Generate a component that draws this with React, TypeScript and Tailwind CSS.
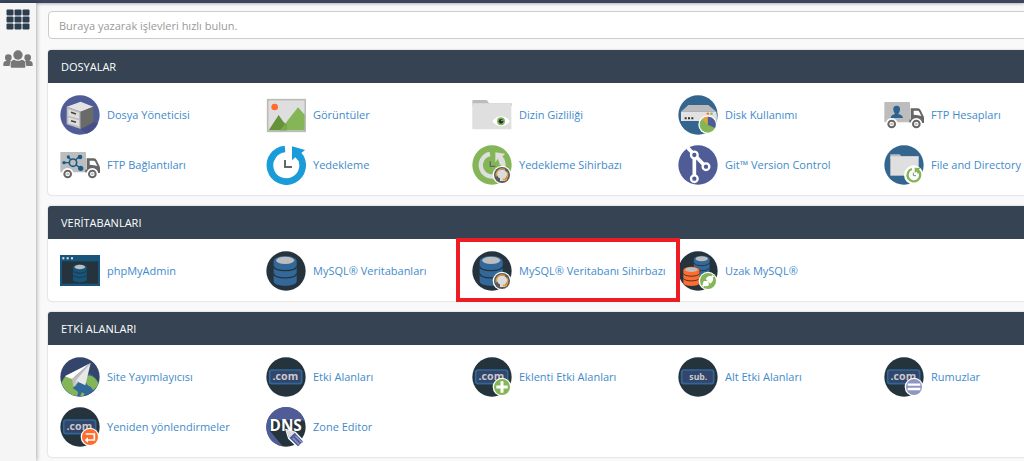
import React from "react";

type IconProps = { children: React.ReactNode };

function Icon({ children }: IconProps) {
  return (
    <svg viewBox="0 0 120 120" className="h-10 w-10 shrink-0" aria-hidden="true">
      {children}
    </svg>
  );
}

function Disc({ fill }: { fill: string }) {
  return <circle cx="60" cy="60" r="59" fill={fill} />;
}

function Truck({ children }: IconProps) {
  return (
    <Icon>
      <rect x="1" y="21" width="77" height="61" rx="2" fill="#bdbdbd" />
      <path d="M80 40h22q5 0 8 6l8 16q2 3 2 6v16H80z" fill="#666" />
      <path d="M89 47h12q3 0 5 4l6 12-10-2-13-2z" fill="#fff" />
      <rect x="76" y="74" width="10" height="8" fill="#666" />
      {[23, 97].map((cx) => (
        <g key={cx}>
          <circle cx={cx} cy="87" r="18" fill="#fff" />
          <circle cx={cx} cy="87" r="10" fill="#fff" stroke="#666" strokeWidth="6" />
          <circle cx={cx} cy="87" r="4" fill="#bbb" />
        </g>
      ))}
      {children}
    </Icon>
  );
}

// Three stacked discs with a grey lid
function Cylinder({ color, line }: { color: string; line: string }) {
  return (
    <>
      <path d="M23 30v61c0 18 69 18 69 0V30z" fill={color} />
      <ellipse cx="57.500" cy="30" rx="34.500" ry="15" fill={color} />
      <ellipse cx="57.500" cy="28" rx="27" ry="11" fill="#bdbdbd" />
      <path d="M23 46c4 17 65 17 69 0M23 68c4 17 65 17 69 0" fill="none" stroke={line} strokeWidth="4" />
    </>
  );
}

function WizardBadge() {
  return (
    <>
      <circle cx="90" cy="90" r="28" fill="#fff" />
      <circle cx="90" cy="90" r="24" fill="#5a5a5a" />
      <path d="M73 94a18 18 0 0 1 26-20M104 80a18 18 0 0 1-8 27" fill="none" stroke="#e5a33c" strokeWidth="4" />
      <path d="M90 74c18 0 19 19 9 26v8H84v-8c-14-7-11-26 6-26z" fill="#dcdcdc" />
      <path d="M92 101h13v5H92z" fill="#e5a33c" />
    </>
  );
}

function DomainPlate({ label }: { label: string }) {
  return (
    <>
      <Disc fill="#25333d" />
      <rect x="11" y="39" width="96" height="41" rx="7" fill="#34456b" stroke="#2f6896" strokeWidth="5" />
      {label === "sub." ? (
        <text x="61" y="69" fontSize="26" fontWeight="700" textAnchor="middle" fill="#c8cacc" className="font-['Open_Sans',sans-serif]">
          {label}
        </text>
      ) : (
        <text x="58" y="70" fontSize="32" fontWeight="700" textAnchor="middle" fill="#c8cacc" className="font-['Open_Sans',sans-serif]">
          {label}
        </text>
      )}
    </>
  );
}

function Badge({ fill, children }: { fill: string; children: React.ReactNode }) {
  return (
    <>
      <circle cx="90" cy="90" r="28" fill="#fff" />
      <circle cx="90" cy="90" r="24" fill={fill} />
      {children}
    </>
  );
}

const icons = {
  fileManager: (
    <Icon>
      <Disc fill="#505c96" />
      <path d="M62 102l38-20 14 3q-10 24-34 31l-18-14z" fill="#465087" />
      <path d="M20 35l42-15 38 15-38 15z" fill="#e4e4e4" />
      <path d="M20 35l42 15v52L20 88z" fill="#bcbcbc" />
      <path d="M62 50l38-15v47l-38 20z" fill="#6a6a66" />
      <path d="M25 43l32 10v18l-32-9zM25 67l32 9v18l-32-10z" fill="#dedede" />
      <path d="M33 52l15 5M33 77l15 5" stroke="#444" strokeWidth="5" />
    </Icon>
  ),
  images: (
    <Icon>
      <rect x="5" y="14" width="113" height="95" fill="#dedede" stroke="#bbb" strokeWidth="5" />
      <circle cx="26" cy="36" r="10" fill="#ff6c2c" />
      <path d="M42 106l54-69 20 22v47z" fill="#84b657" />
      <path d="M8 106l30-46 14 20 10 10v16z" fill="#669239" />
      <path d="M42 106l15-20 8 14-3 6z" fill="#78a94c" />
    </Icon>
  ),
  directoryPrivacy: (
    <Icon>
      <path d="M1 28V18q0-3 3-3h38q3 0 5 3l4 7h68v8H1z" fill="#bcbcbc" />
      <rect x="1" y="25" width="117" height="78" rx="2" fill="#dfdfdf" />
      <path d="M61 79c15-20 38-20 53 0-15 20-38 20-53 0z" fill="#fff" />
      <circle cx="87" cy="79" r="12" fill="#84b657" />
      <circle cx="87" cy="79" r="7" fill="#25333d" />
      <circle cx="90" cy="76" r="2" fill="#fff" />
    </Icon>
  ),
  diskUsage: (
    <Icon>
      <Disc fill="#33658f" />
      <path d="M31 30h60l24 20H9z" fill="#bbb" />
      <path d="M9 50h106q3 12 1 28H9z" fill="#e2e2e2" />
      <path d="M20 67h6v6h-6zM30 67h6v6h-6zM40 67h6v6h-6z" fill="#333" />
      <path d="M86 53h7v6h-7z" fill="#ff6c2c" />
      <path d="M97 53h7v6h-7z" fill="#84b657" />
      <circle cx="89" cy="89" r="28" fill="#fff" />
      <circle cx="89" cy="89" r="24" fill="#84b657" />
      <path d="M89 89V65a24 24 0 0 1 22 34z" fill="#505c96" />
      <path d="M89 89V65a24 24 0 0 0-17 7z" fill="#e5a33c" />
    </Icon>
  ),
  ftpAccounts: (
    <Truck>
      <path d="M38 32c8 0 11 5 10 12s-3 9-5 11c0 5 13 3 14 14H20c1-11 13-9 13-14-2-2-4-4-5-11s2-12 10-12z" fill="#2c6390" />
    </Truck>
  ),
  ftpConnections: (
    <Truck>
      <path d="M12 53h17M24 36l10 10M46 46l14-14M46 59l16 10" stroke="#185b87" strokeWidth="4" />
      <circle cx="39" cy="53" r="11" fill="#bdbdbd" stroke="#185b87" strokeWidth="5" />
      <circle cx="12" cy="53" r="5" fill="#185b87" />
      <circle cx="25" cy="36" r="5" fill="#185b87" />
      <circle cx="60" cy="36" r="7" fill="#185b87" />
      <circle cx="62" cy="70" r="8" fill="#185b87" />
    </Truck>
  ),
  backup: (
    <Icon>
      <path d="M57 12a49 49 0 1 0 42 18" fill="none" stroke="#1a9bda" strokeWidth="20" />
      <path d="M78 4l39 11-12 10 6 10-14 12-9-10-10 9z" fill="#1a9bda" />
      <path d="M57 45v21h21" fill="none" stroke="#666" strokeWidth="6" />
    </Icon>
  ),
  backupWizard: (
    <Icon>
      <Disc fill="#84b657" />
      <path d="M54 27a34 34 0 1 0 32 11" fill="none" stroke="#dedede" strokeWidth="13" />
      <path d="M70 22l29 4-8 9 6 21-13 5-6-20-8 11z" fill="#dedede" />
      <path d="M55 49v15h15" fill="none" stroke="#666" strokeWidth="4" />
      <WizardBadge />
    </Icon>
  ),
  git: (
    <Icon>
      <Disc fill="#505c96" />
      <path d="M29 8l54 57M49 30v71" stroke="#fff" strokeWidth="11" />
      {[
        [49, 30],
        [84, 65],
        [49, 101],
      ].map(([cx, cy]) => (
        <circle key={cy} cx={cx} cy={cy} r="10" fill="#505c96" stroke="#fff" strokeWidth="7" />
      ))}
    </Icon>
  ),
  restore: (
    <Icon>
      <Disc fill="#33658f" />
      <path d="M19 35v-7h28l5 6h51v8H19z" fill="#bcbcbc" />
      <path d="M19 34h85v58H19z" fill="#dfdfdf" />
      <circle cx="89" cy="90" r="29" fill="#fff" />
      <path d="M84 72a19 19 0 1 0 17 3" fill="none" stroke="#84b657" strokeWidth="7" />
      <path d="M92 68l17 1-5 6 5 7-8 4-3-6-6 3z" fill="#84b657" />
      <path d="M88 83v9h8" fill="none" stroke="#888" strokeWidth="3" />
    </Icon>
  ),
  phpMyAdmin: (
    <Icon>
      <rect x="0" y="12" width="120" height="93" fill="#17557c" />
      <rect x="6" y="31" width="108" height="67" fill="#25333d" />
      <path d="M7 19h6v6H7zM20 19h6v6h-6zM33 19h6v6h-6z" fill="#dfe6ea" />
      <g transform="translate(25 31) scale(0.6)">
        <Cylinder color="#17557c" line="#25333d" />
      </g>
    </Icon>
  ),
  mysql: (
    <Icon>
      <Disc fill="#25333d" />
      <Cylinder color="#33689a" line="#25333d" />
    </Icon>
  ),
  mysqlWizard: (
    <Icon>
      <Disc fill="#25333d" />
      <Cylinder color="#33689a" line="#25333d" />
      <WizardBadge />
    </Icon>
  ),
  remoteMysql: (
    <Icon>
      <Disc fill="#25333d" />
      <g transform="translate(32 4) scale(0.68)">
        <Cylinder color="#33689a" line="#25333d" />
      </g>
      <ellipse cx="40" cy="60" rx="27" ry="13" fill="#25333d" />
      <g transform="translate(0 38) scale(0.7 0.64)">
        <Cylinder color="#ff6c2c" line="#25333d" />
      </g>
      <Badge fill="#84b657">
        <path d="M74 106l8-8M98 82l8-8" stroke="#fff" strokeWidth="6" />
        <path d="M78 90q-7 9 0 14 8 5 15-2l-2-12zM83 84q5-11 15-9 11 4 6 15-2 4-7 8z" fill="#fff" />
      </Badge>
    </Icon>
  ),
  sitePublisher: (
    <Icon>
      <Disc fill="#34456b" />
      <path d="M5 80Q15 46 60 44q45 2 55 36a59 59 0 0 1-110 0z" fill="#33689a" />
      <path d="M12 63q15-14 32-14l2 18 4 18-12 8 12 8q8 6 0 16Q18 112 4 78zM76 58q14-6 27 4 10 9 12 18-4 12-16 20-5-12-14-14-10-6-9-28zM66 106l8 4-4 7-10 1z" fill="#84b657" />
      <path d="M92 18L14 58l22 8z" fill="#fff" />
      <path d="M92 18L36 66l4 23z" fill="#bdbdbd" />
      <path d="M92 18L47 71l29 14z" fill="#e8e8e8" />
      <path d="M47 71l-7 18 16-14z" fill="#d0d0d0" />
    </Icon>
  ),
  domains: (
    <Icon>
      <DomainPlate label=".com" />
    </Icon>
  ),
  addonDomains: (
    <Icon>
      <DomainPlate label=".com" />
      <Badge fill="#84b657">
        <path d="M90 73v34M73 90h34" stroke="#fff" strokeWidth="9" />
      </Badge>
    </Icon>
  ),
  subdomains: (
    <Icon>
      <DomainPlate label="sub." />
    </Icon>
  ),
  aliases: (
    <Icon>
      <DomainPlate label=".com" />
      <Badge fill="#8f96c5">
        <path d="M71 83h38M71 96h38" stroke="#fff" strokeWidth="7" />
      </Badge>
    </Icon>
  ),
  redirects: (
    <Icon>
      <DomainPlate label=".com" />
      <Badge fill="#ff6c2c">
        <path d="M77 81h26v18H82" fill="none" stroke="#fff" strokeWidth="5" />
        <path d="M84 91v16L74 99z" fill="#fff" />
      </Badge>
    </Icon>
  ),
  zoneEditor: (
    <Icon>
      <Disc fill="#25333d" />
      <path d="M1 60a59 59 0 0 1 116-16l-7-4H12v32l38 46Q3 108 1 60z" fill="#505c96" />
      <text x="59" y="72" fontSize="46" fontWeight="700" textAnchor="middle" fill="#fff" className="font-['Open_Sans',sans-serif]">
        DNS
      </text>
      <path d="M60 68l28 8 25 27-17 18-28-27z" fill="#505c96" stroke="#fff" strokeWidth="4" />
      <path d="M60 68l28 8-18 17z" fill="#ddd" />
      <path d="M88 86l21 22M80 92l21 22" stroke="#8f96c5" strokeWidth="4" />
    </Icon>
  ),
};

type Item = { label: string; icon: keyof typeof icons; marked?: boolean };

const sections: { title: string; items: Item[] }[] = [
  {
    title: "DOSYALAR",
    items: [
      { label: "Dosya Yöneticisi", icon: "fileManager" },
      { label: "Görüntüler", icon: "images" },
      { label: "Dizin Gizliliği", icon: "directoryPrivacy" },
      { label: "Disk Kullanımı", icon: "diskUsage" },
      { label: "FTP Hesapları", icon: "ftpAccounts" },
      { label: "FTP Bağlantıları", icon: "ftpConnections" },
      { label: "Yedekleme", icon: "backup" },
      { label: "Yedekleme Sihirbazı", icon: "backupWizard" },
      { label: "Git™ Version Control", icon: "git" },
      { label: "File and Directory", icon: "restore" },
    ],
  },
  {
    title: "VERİTABANLARI",
    items: [
      { label: "phpMyAdmin", icon: "phpMyAdmin" },
      { label: "MySQL® Veritabanları", icon: "mysql" },
      { label: "MySQL® Veritabanı Sihirbazı", icon: "mysqlWizard", marked: true },
      { label: "Uzak MySQL®", icon: "remoteMysql" },
    ],
  },
  {
    title: "ETKİ ALANLARI",
    items: [
      { label: "Site Yayımlayıcısı", icon: "sitePublisher" },
      { label: "Etki Alanları", icon: "domains" },
      { label: "Eklenti Etki Alanları", icon: "addonDomains" },
      { label: "Alt Etki Alanları", icon: "subdomains" },
      { label: "Rumuzlar", icon: "aliases" },
      { label: "Yeniden yönlendirmeler", icon: "redirects" },
      { label: "Zone Editor", icon: "zoneEditor" },
    ],
  },
];

function Sidebar() {
  return (
    <nav className="z-10 flex w-9 shrink-0 flex-col items-center gap-5 bg-[#f5f5f5] pt-1.5 shadow-[1px_0_4px_rgba(0,0,0,0.3)]">
      <a href="#home" aria-label="Ana sayfa">
        <svg viewBox="0 0 24 21" className="h-[21px] w-6" fill="#2c3d50">
          {[0, 7, 14].map((y) =>
            [0, 8, 16].map((x) => <rect key={`${x}-${y}`} x={x + 0.5} y={y + 0.5} width="7" height="6" rx="1" />)
          )}
        </svg>
      </a>
      <a href="#users" aria-label="Kullanıcılar">
        <svg viewBox="0 0 90 54" className="h-[18px] w-[30px]" fill="#777">
          <circle cx="16" cy="23" r="10" />
          <circle cx="74" cy="23" r="10" />
          <path d="M1 48V42q0-9 9-9h14q-4 6-4 15zM89 48V42q0-9-9-9H66q4 6 4 15z" />
          <circle cx="45" cy="15" r="14" />
          <path d="M23 50V41q0-11 11-12 11 7 22 0 11 1 11 12v9q0 3-3 3H26q-3 0-3-3z" />
        </svg>
      </a>
    </nav>
  );
}

export default function App() {
  return (
    <div className="flex min-h-screen flex-col overflow-hidden bg-[#f9f9f9] font-['Open_Sans',sans-serif] text-[11px] leading-5">
      <header className="h-[3px] bg-[#3a465c] shadow-[0_1px_3px_rgba(0,0,0,0.3)]" />
      <div className="flex flex-1">
        <Sidebar />
        {/* Panels run past the right edge of the window */}
        <main className="min-w-0 flex-1 pl-3 pt-2">
          <div className="-mr-[78px] flex flex-col gap-[11px]">
            <input
              type="text"
              aria-label="İşlev ara"
              placeholder="Buraya yazarak işlevleri hızlı bulun."
              className="h-7 w-full rounded border border-[#ccc] bg-white px-2.5 text-[11px] placeholder:text-[#999]"
            />
            {sections.map((section) => (
              <section key={section.title} className="rounded bg-white shadow-[0_0_2px_rgba(0,0,0,0.25)]">
                <h2 className="rounded-t-[3px] bg-[#354353] px-[13px] py-1.5 leading-[21px] text-white">
                  {section.title}
                </h2>
                <ul className="grid grid-cols-5 gap-y-2.5 px-3 pb-2.5 pt-3">
                  {section.items.map((item) => (
                    <li key={item.label} className="relative">
                      <a href="#" className="flex items-center gap-[7px] whitespace-nowrap text-[#428bca] hover:underline">
                        {icons[item.icon]}
                        {item.label}
                      </a>
                      {item.marked && (
                        <span className="pointer-events-none absolute -bottom-[11px] -left-4 -right-0.5 -top-[13px] z-10 border-4 border-[#ee1c25]" />
                      )}
                    </li>
                  ))}
                </ul>
              </section>
            ))}
          </div>
        </main>
      </div>
    </div>
  );
}
